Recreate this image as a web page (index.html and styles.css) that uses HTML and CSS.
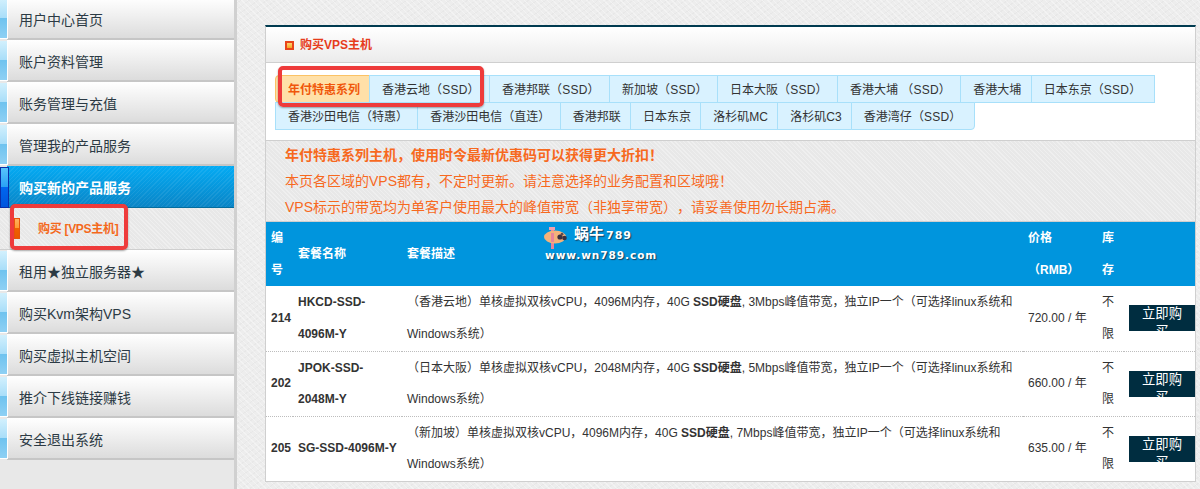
FILE: index.html
```html
<!DOCTYPE html>
<html lang="zh">
<head>
<meta charset="utf-8">
<title>购买VPS主机</title>
<link rel="stylesheet" href="styles.css">
</head>
<body>
<div class="page">
  <nav class="sidebar">
    <a class="nav-item">用户中心首页</a>
    <a class="nav-item">账户资料管理</a>
    <a class="nav-item">账务管理与充值</a>
    <a class="nav-item">管理我的产品服务</a>
    <a class="nav-item nav-active">购买新的产品服务</a>
    <a class="nav-sub"><span class="nav-sub-mark"></span>购买 [VPS主机]</a>
    <a class="nav-item">租用★独立服务器★</a>
    <a class="nav-item">购买Kvm架构VPS</a>
    <a class="nav-item">购买虚拟主机空间</a>
    <a class="nav-item">推介下线链接赚钱</a>
    <a class="nav-item">安全退出系统</a>
  </nav>
  <main class="main">
    <section class="panel">
      <header class="panel-head"><span class="panel-icon"></span>购买VPS主机</header>
      <div class="tabs">
        <a class="tab tab-active">年付特惠系列</a>
        <a class="tab">香港云地<span class="ssd">（SSD）</span></a>
        <a class="tab">香港邦联<span class="ssd">（SSD）</span></a>
        <a class="tab">新加坡<span class="ssd">（SSD）</span></a>
        <a class="tab">日本大阪<span class="ssd">（SSD）</span></a>
        <a class="tab">香港大埔&nbsp;<span class="ssd">（SSD）</span></a>
        <a class="tab">香港大埔</a>
        <a class="tab">日本东京<span class="ssd">（SSD）</span>&nbsp;</a>
        <a class="tab">香港沙田电信（特惠）</a>
        <a class="tab">香港沙田电信（直连）</a>
        <a class="tab">香港邦联</a>
        <a class="tab">日本东京</a>
        <a class="tab">洛杉矶MC</a>
        <a class="tab">洛杉矶C3</a>
        <a class="tab tab-last">香港湾仔<span class="ssd">（SSD）</span>&nbsp;</a>
      </div>
      <div class="notice">
        <p class="notice-title">年付特惠系列主机，使用时令最新优惠码可以获得更大折扣！</p>
        <p>本页各区域的VPS都有，不定时更新。请注意选择的业务配置和区域哦！</p>
        <p>VPS标示的带宽均为单客户使用最大的峰值带宽（非独享带宽），请妥善使用勿长期占满。</p>
      </div>
      <table class="plans">
        <colgroup>
          <col class="col-id"><col class="col-name"><col class="col-desc"><col class="col-price"><col class="col-stock"><col class="col-buy">
        </colgroup>
        <thead>
          <tr>
            <th>编号</th><th>套餐名称</th><th>套餐描述</th><th>价格<br>（RMB）</th><th>库存</th><th></th>
          </tr>
        </thead>
        <tbody>
          <tr>
            <td class="strong">214</td>
            <td class="strong">HKCD-SSD-4096M-Y</td>
            <td>（香港云地）单核虚拟双核vCPU，4096M内存，40G <b>SSD硬盘</b>, 3Mbps峰值带宽，独立IP一个（可选择linux系统和Windows系统）</td>
            <td>720.00 / 年</td>
            <td>不限</td>
            <td class="buy-cell"><a class="buy">立即购买</a></td>
          </tr>
          <tr>
            <td class="strong">202</td>
            <td class="strong">JPOK-SSD-2048M-Y</td>
            <td>（日本大阪）单核虚拟双核vCPU，2048M内存，40G <b>SSD硬盘</b>, 5Mbps峰值带宽，独立IP一个（可选择linux系统和Windows系统）</td>
            <td>660.00 / 年</td>
            <td>不限</td>
            <td class="buy-cell"><a class="buy">立即购买</a></td>
          </tr>
          <tr>
            <td class="strong">205</td>
            <td class="strong name-one">SG-SSD-4096M-Y</td>
            <td>（新加坡）单核虚拟双核vCPU，4096M内存，40G <b>SSD硬盘</b>, 7Mbps峰值带宽，独立IP一个（可选择linux系统和Windows系统）</td>
            <td>635.00 / 年</td>
            <td>不限</td>
            <td class="buy-cell"><a class="buy">立即购买</a></td>
          </tr>
        </tbody>
      </table>
    </section>
  </main>
  <div class="watermark">
    <svg class="wm-snail" width="24" height="22" viewBox="0 0 24 22" aria-hidden="true">
      <rect x="7" y="0" width="3" height="22" fill="#e9849a"/>
      <rect x="5" y="0" width="6" height="3" fill="#f0a0ae"/>
      <ellipse cx="11" cy="10" rx="11" ry="6.5" fill="#f4b27a"/>
      <rect x="7" y="6" width="3" height="9" fill="#e9849a"/>
      <circle cx="16" cy="10" r="2.6" fill="#3a3040"/>
      <circle cx="20.5" cy="11" r="2.3" fill="#3a3040"/>
      <circle cx="18" cy="7.2" r="1.4" fill="#5a4a50"/>
    </svg>
    <span class="wm-name">蜗牛<i>789</i></span>
    <span class="wm-url">www.wn789.com</span>
  </div>
  <div class="callout callout-tabs"></div>
  <div class="callout callout-sub"></div>
</div>
</body>
</html>
```

FILE: styles.css
```css
* { box-sizing: border-box; }
html, body { margin: 0; height: 100%; overflow: hidden; }
body {
  font: 12px/1.5 "Liberation Sans", "Noto Sans CJK SC", sans-serif;
  color: #333;
  background-color: #ececec;
  text-spacing-trim: space-all;
}
p { margin: 0; }

.page {
  position: relative;
  display: flex;
  width: 1200px;
  height: 489px;
  overflow: hidden;
  background-color: #ededed;
  background-image:
    repeating-linear-gradient(45deg, rgba(255,255,255,.35) 0 1px, transparent 1px 4px),
    repeating-linear-gradient(-35deg, rgba(0,0,0,.025) 0 1px, transparent 1px 5px);
}

/* sidebar */
.sidebar {
  flex: none;
  width: 237px;
  margin-top: -2px;
  background-color: #e8e8e8;
  border-right: 3px solid #d0d0d0;
}
.nav-item {
  position: relative;
  display: flex;
  align-items: center;
  height: 42px;
  margin-left: 7px;
  padding: 4px 0 0 12px;
  font-size: 14px;
  color: #2c3a44;
  background: linear-gradient(#ffffff, #dcdcdc);
  border-bottom: 2px solid #c6c6c6;
}
.nav-item::before {
  content: "";
  position: absolute;
  left: -7px;
  top: 1px;
  bottom: -1px;
  width: 7px;
  border-right: 1px solid #fff;
  border-bottom: 1px solid #fff;
  background: linear-gradient(#d2f0fd 0%, #a9def9 48%, #6fc3ef 50%, #8ed0f4 100%);
}
.nav-active {
  color: #fff;
  font-weight: 700;
  background:
    repeating-linear-gradient(-45deg, rgba(255,255,255,.07) 0 1px, transparent 1px 3px),
    linear-gradient(#04abf4, #0a85c6);
  border-bottom: 1px solid #056d9e;
}
.nav-active::before {
  background: linear-gradient(#58c4fb 0%, #2aa2f5 48%, #0066ee 50%, #0055dd 100%);
  border: 1px solid #0a2fa8;
}
.nav-sub {
  display: flex;
  align-items: center;
  height: 42px;
  padding-left: 14px;
  font-weight: 700;
  letter-spacing: -.3px;
  color: #f4691c;
  background-color: #e8e8e8;
  background-image: repeating-linear-gradient(45deg, rgba(255,255,255,.3) 0 1px, transparent 1px 3px);
  border-bottom: 1px solid #cfcfcf;
}
.nav-sub-mark {
  width: 6px;
  height: 21px;
  margin-right: 18px;
  border: 1px solid #e8540a;
  background: linear-gradient(#ffb060 0%, #ff9a30 48%, #f06000 50%, #e85800 100%);
}

/* main panel */
.main {
  flex: 1;
  min-width: 0;
  padding: 25px 4px 0 28px;
}
.panel {
  height: 457px;
  background: #fff;
  border: 1px solid #cfcfcf;
  border-top: 2px solid #003b50;
  overflow: hidden;
}
.panel-head {
  display: flex;
  align-items: center;
  height: 36px;
  padding: 1px 0 0 19px;
  font-weight: 700;
  color: #e63c1c;
  background: linear-gradient(#ffffff, #ebebeb);
  border-bottom: 1px solid #cfcfcf;
}
.panel-icon {
  width: 9px;
  height: 9px;
  margin-right: 6px;
  border: 2px solid #e8441a;
  background: linear-gradient(#ffd36e, #f5a623);
}

/* tabs */
.tabs {
  display: flex;
  flex-wrap: wrap;
  padding: 12px 10px 11px 9px;
  font-family: "Liberation Sans", "Noto Sans CJK TC", sans-serif;
}
.tab {
  display: flex;
  align-items: center;
  height: 28px;
  margin: 0 -1px -1px 0;
  padding: 1px 9.3px 0 12px;
  color: #333;
  white-space: pre;
  background: #d9f2ff;
  border: 1px solid #a8e0fa;
}
.ssd { letter-spacing: .2px; }
.tab-active {
  padding-right: 9px;
  font-weight: 700;
  color: #f0570a;
  background: #ffe0a8;
  border-color: #fbc265;
  border-radius: 4px 0 0 4px;
}
.tab-last { border-radius: 0 0 4px 0; }

/* notice */
.notice {
  height: 82px;
  padding: 1px 0 0 19px;
  font-size: 14px;
  line-height: 26px;
  color: #f7691e;
  background-color: #e8e8e8;
  background-image: repeating-linear-gradient(45deg, rgba(255,255,255,.3) 0 1px, transparent 1px 3px);
  border-top: 1px solid #cfcfcf;
  border-bottom: 1px solid #cfcfcf;
}
.notice-title { font-weight: 700; }

/* table */
.plans {
  width: 100%;
  table-layout: fixed;
  border-collapse: collapse;
}
.col-id { width: 27px; }
.col-name { width: 109px; }
.col-desc { width: 621px; }
.col-price { width: 74px; }
.col-stock { width: 27px; }
.col-buy { width: 71px; }
.plans th, .plans td {
  padding: 1px 5px 0;
  line-height: 31.5px;
  text-align: left;
  vertical-align: middle;
}
.plans th {
  height: 64px;
  color: #fff;
  font-weight: 700;
  background: #0095dd;
}
.plans td {
  height: 65px;
  border-bottom: 1px dotted #bdbdbd;
}
.strong { font-weight: 700; }
.name-one { white-space: nowrap; }
.plans .buy-cell { padding: 0 0 0 5px; }
.buy {
  display: block;
  width: 66px;
  height: 26px;
  overflow: hidden;
  padding: 0 10px;
  font-size: 13.33px;
  line-height: 18px;
  text-align: center;
  color: #fff;
  background: #002d40;
}

/* watermark */
.watermark {
  position: absolute;
  left: 544px;
  top: 224px;
  width: 120px;
  height: 40px;
  color: #fff;
  text-shadow: 1px 1px 1px #1a3d5a;
}
.wm-snail { position: absolute; left: 0; top: 3px; }
.wm-name {
  position: absolute;
  left: 30px;
  top: 0;
  font-size: 15px;
  line-height: 20px;
  font-weight: 700;
}
.wm-name i {
  font: 700 11px/20px "DejaVu Sans", sans-serif;
  letter-spacing: 1px;
  margin-left: 2px;
}
.wm-url {
  position: absolute;
  left: 1px;
  top: 24px;
  font: 700 10.5px/14px "DejaVu Sans", sans-serif;
  letter-spacing: .95px;
  white-space: nowrap;
}

/* annotation frames */
.callout {
  position: absolute;
  border: 4px solid #ee3b3b;
  border-radius: 5px;
  box-shadow: 0 1px 2px rgba(0,0,0,.35);
}
.callout-tabs { left: 278px; top: 66px; width: 206px; height: 41px; }
.callout-sub { left: 10px; top: 204px; width: 118px; height: 46px; }
```
